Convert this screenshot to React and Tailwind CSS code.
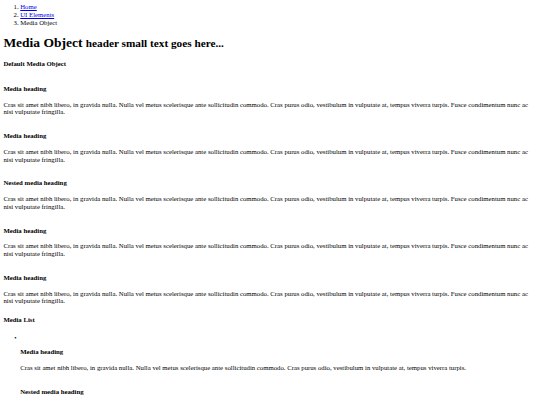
import React from "react";

const LONG =
  "Cras sit amet nibh libero, in gravida nulla. Nulla vel metus scelerisque ante sollicitudin commodo. Cras purus odio, vestibulum in vulputate at, tempus viverra turpis. Fusce condimentum nunc ac nisi vulputate fringilla.";
const SHORT =
  "Cras sit amet nibh libero, in gravida nulla. Nulla vel metus scelerisque ante sollicitudin commodo. Cras purus odio, vestibulum in vulputate at, tempus viverra turpis.";

function Media({ heading, text, first }) {
  return (
    <div>
      <h4 className={(first ? "mt-[17.1px]" : "mt-[16px]") + " font-bold"}>{heading}</h4>
      <p className="mt-[8px]">{text}</p>
    </div>
  );
}

export default function App() {
  return (
    <div className="min-h-screen bg-white px-[3.375px] pt-[3px] font-['Liberation_Serif',serif] text-[6.75px] leading-[7.75px] text-black">
      <ol className="list-decimal pl-[16.875px]">
        <li>
          <a href="#" className="text-[#0000EE] underline">Home</a>
        </li>
        <li>
          <a href="#" className="text-[#0000EE] underline">UI Elements</a>
        </li>
        <li>Media Object</li>
      </ol>
      <h1 className="mt-[9px] text-[13.5px] font-bold leading-[15.5px]">
        Media Object <small className="text-[11.25px]">header small text goes here...</small>
      </h1>
      <h4 className="mt-[8.4px] font-bold">Default Media Object</h4>
      <Media heading="Media heading" text={LONG} first />
      <Media heading="Media heading" text={LONG} />
      <Media heading="Nested media heading" text={LONG} />
      <Media heading="Media heading" text={LONG} />
      <Media heading="Media heading" text={LONG} />
      <h4 className="mt-[10.75px] font-bold">Media List</h4>
      <ul className="mt-[10.25px] list-none pl-[16.875px]">
        <li>
          <div className="-ml-[6px]">{"\u2022"}</div>
          <h4 className="mt-[6.25px] font-bold">Media heading</h4>
          <p className="mt-[8.25px]">{SHORT}</p>
          <h4 className="mt-[16.25px] font-bold">Nested media heading</h4>
          <p className="mt-[8px]">{SHORT}</p>
        </li>
      </ul>
    </div>
  );
}
